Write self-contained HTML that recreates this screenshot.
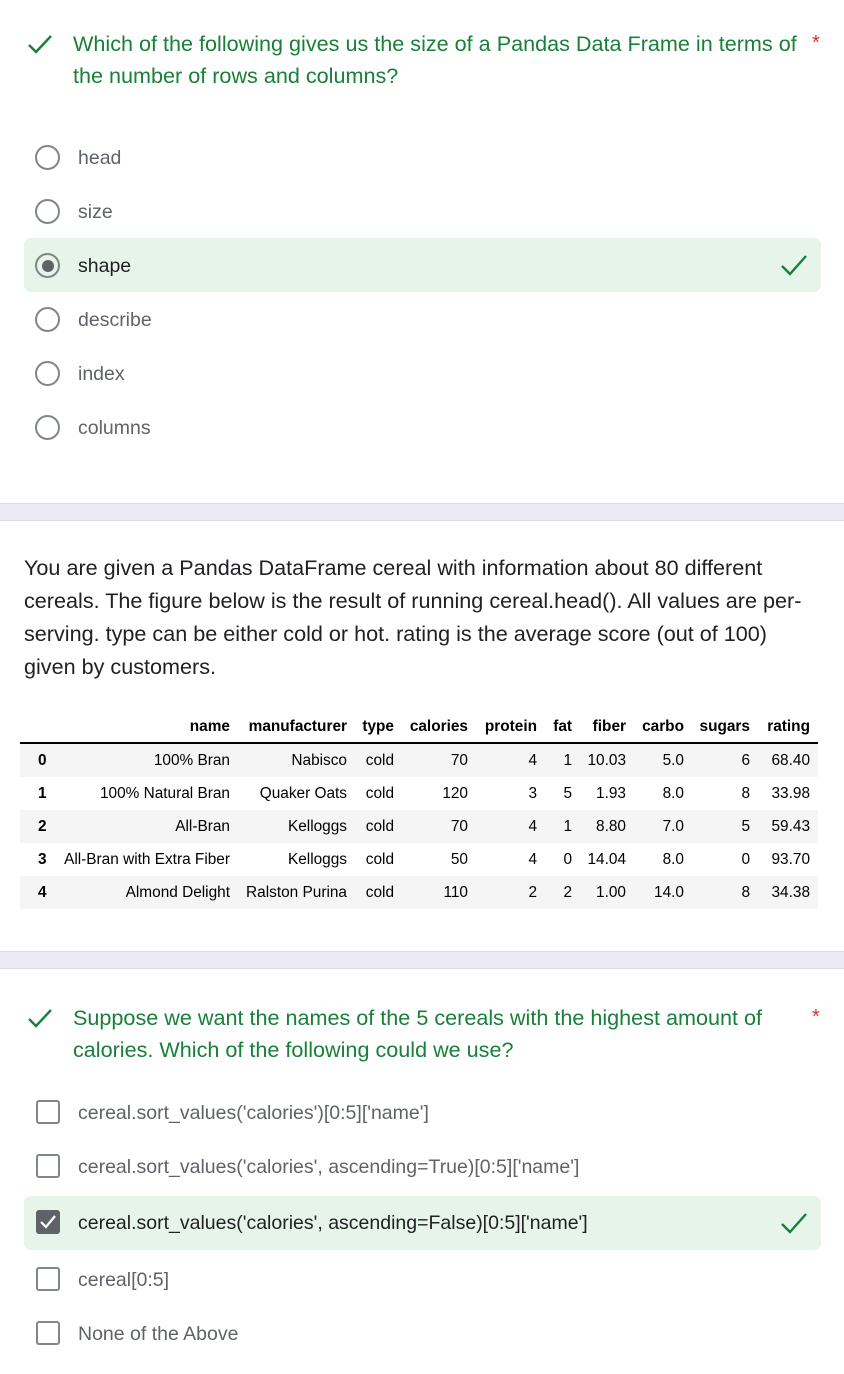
<!DOCTYPE html>
<html><head><meta charset="utf-8"><style>
*{margin:0;padding:0;box-sizing:border-box}
body{width:844px;height:1374px;background:#fff;position:relative;overflow:hidden;font-family:"Liberation Sans",Arial,sans-serif}
.a{position:absolute;white-space:nowrap}
.q{color:#188038;font-size:21.6px;line-height:32px}
.opt{font-size:19.5px;color:#5f6368;line-height:22px}
.sel{color:#202124}
.radio{position:absolute;width:25px;height:25px;border:2px solid #80868b;border-radius:50%}
.cb{position:absolute;width:24px;height:24px;border:2px solid #80868b;border-radius:3px}
.hl{position:absolute;left:24px;width:797px;height:54px;background:#e6f4ea;border-radius:7px}
.band{position:absolute;left:0;width:844px;height:18px;background:#ede9f7;border-top:1.5px solid #dadce0;border-bottom:1.5px solid #dadce0}
.p{font-size:21.6px;color:#202124;line-height:33px;left:24px}
.t{font-size:15.4px;color:#000;position:absolute;text-align:right;line-height:16px}
.stripe{position:absolute;left:20px;width:798px;height:33px;background:#f5f5f5}
</style></head><body>

<svg class="a" style="left:27px;top:33px" width="26" height="22" viewBox="0 0 26 22"><path d="M2 12 L9 19 L24 3" fill="none" stroke="#188038" stroke-width="2.4"/></svg>
<div class="a q" style="left:73px;top:28px">Which of the following gives us the size of a Pandas Data Frame in terms of</div>
<div class="a q" style="left:73px;top:60px">the number of rows and columns?</div>
<div class="a" style="left:812px;top:32px;color:#d93025;font-size:20px">*</div>

<div class="hl" style="top:238px"></div>
<div class="radio" style="left:35px;top:145px"></div><div class="a opt" style="left:78px;top:147px">head</div>
<div class="radio" style="left:35px;top:199px"></div><div class="a opt" style="left:78px;top:201px">size</div>
<div class="radio" style="left:35px;top:253px"></div><div class="a" style="left:42px;top:260px;width:12px;height:12px;border-radius:50%;background:#5f6368"></div><div class="a opt sel" style="left:78px;top:255px">shape</div>
<svg class="a" style="left:780px;top:253px" width="28" height="24" viewBox="0 0 28 24"><path d="M2 13 L10 21 L26 3" fill="none" stroke="#188038" stroke-width="2.4"/></svg>
<div class="radio" style="left:35px;top:307px"></div><div class="a opt" style="left:78px;top:309px">describe</div>
<div class="radio" style="left:35px;top:361px"></div><div class="a opt" style="left:78px;top:363px">index</div>
<div class="radio" style="left:35px;top:415px"></div><div class="a opt" style="left:78px;top:417px">columns</div>

<div class="band" style="top:503px"></div>

<div class="a p" style="top:551px">You are given a Pandas DataFrame cereal with information about 80 different</div>
<div class="a p" style="top:584px">cereals. The figure below is the result of running cereal.head(). All values are per-</div>
<div class="a p" style="top:617px">serving. type can be either cold or hot. rating is the average score (out of 100)</div>
<div class="a p" style="top:650px">given by customers.</div>

<div class="stripe" style="top:744px"></div>
<div class="stripe" style="top:810px"></div>
<div class="stripe" style="top:876px"></div>
<div class="a" style="left:20px;top:742px;width:798px;height:1.5px;background:#000"></div>

<div id="tbl"></div>
<script>
var r=[230,347,394,468,537,572,626,684,750,810];
var h=["name","manufacturer","type","calories","protein","fat","fiber","carbo","sugars","rating"];
var d=[["100% Bran","Nabisco","cold","70","4","1","10.03","5.0","6","68.40"],
["100% Natural Bran","Quaker Oats","cold","120","3","5","1.93","8.0","8","33.98"],
["All-Bran","Kelloggs","cold","70","4","1","8.80","7.0","5","59.43"],
["All-Bran with Extra Fiber","Kelloggs","cold","50","4","0","14.04","8.0","0","93.70"],
["Almond Delight","Ralston Purina","cold","110","2","2","1.00","14.0","8","34.38"]];
var s="";
function c(x,y,t,b){return '<div class="t" style="right:'+(844-x)+'px;top:'+y+'px;'+(b?'font-weight:bold;':'')+'">'+t+'</div>';}
for(var i=0;i<10;i++)s+=c(r[i],719,h[i],1);
for(var j=0;j<5;j++){var y=753+33*j;s+='<div class="t" style="left:38px;top:'+y+'px;font-weight:bold">'+j+'</div>';
for(var i=0;i<10;i++)s+=c(r[i],y,d[j][i],0);}
document.getElementById('tbl').innerHTML=s;
</script>

<div class="band" style="top:951px"></div>

<svg class="a" style="left:27px;top:1007px" width="26" height="22" viewBox="0 0 26 22"><path d="M2 12 L9 19 L24 3" fill="none" stroke="#188038" stroke-width="2.4"/></svg>
<div class="a q" style="left:73px;top:1002px">Suppose we want the names of the 5 cereals with the highest amount of</div>
<div class="a q" style="left:73px;top:1034px">calories. Which of the following could we use?</div>
<div class="a" style="left:812px;top:1006px;color:#d93025;font-size:20px">*</div>

<div class="hl" style="top:1196px"></div>
<div class="cb" style="left:36px;top:1100px"></div><div class="a opt" style="left:78px;top:1102px">cereal.sort_values('calories')[0:5]['name']</div>
<div class="cb" style="left:36px;top:1154px"></div><div class="a opt" style="left:78px;top:1156px">cereal.sort_values('calories', ascending=True)[0:5]['name']</div>
<div class="a" style="left:36px;top:1210px;width:24px;height:24px;border-radius:3px;background:#5f6368"></div>
<svg class="a" style="left:36px;top:1210px" width="24" height="24" viewBox="0 0 24 24"><path d="M5 12 L10 17 L19 6" fill="none" stroke="#fff" stroke-width="2.2"/></svg>
<div class="a opt sel" style="left:78px;top:1212px">cereal.sort_values('calories', ascending=False)[0:5]['name']</div>
<svg class="a" style="left:780px;top:1211px" width="28" height="24" viewBox="0 0 28 24"><path d="M2 13 L10 21 L26 3" fill="none" stroke="#188038" stroke-width="2.4"/></svg>
<div class="cb" style="left:36px;top:1267px"></div><div class="a opt" style="left:78px;top:1269px">cereal[0:5]</div>
<div class="cb" style="left:36px;top:1321px"></div><div class="a opt" style="left:78px;top:1323px">None of the Above</div>
</body></html>
